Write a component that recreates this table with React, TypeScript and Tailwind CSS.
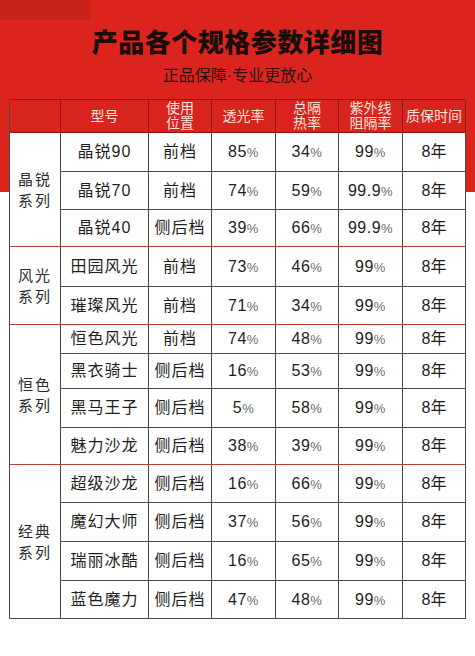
import React from "react";

type Item = { model: string; pos: string; t: string; h: string; uv: string };

const groups: { name: [string, string]; span: string; rows: Item[]; red: boolean }[] = [
  {
    name: ["晶锐", "系列"],
    span: "row-span-3",
    red: true,
    rows: [
      { model: "晶锐90", pos: "前档", t: "85", h: "34", uv: "99" },
      { model: "晶锐70", pos: "前档", t: "74", h: "59", uv: "99.9" },
      { model: "晶锐40", pos: "侧后档", t: "39", h: "66", uv: "99.9" },
    ],
  },
  {
    name: ["风光", "系列"],
    span: "row-span-2",
    red: true,
    rows: [
      { model: "田园风光", pos: "前档", t: "73", h: "46", uv: "99" },
      { model: "璀璨风光", pos: "前档", t: "71", h: "34", uv: "99" },
    ],
  },
  {
    name: ["恒色", "系列"],
    span: "row-span-4",
    red: true,
    rows: [
      { model: "恒色风光", pos: "前档", t: "74", h: "48", uv: "99" },
      { model: "黑衣骑士", pos: "侧后档", t: "16", h: "53", uv: "99" },
      { model: "黑马王子", pos: "侧后档", t: "5", h: "58", uv: "99" },
      { model: "魅力沙龙", pos: "侧后档", t: "38", h: "39", uv: "99" },
    ],
  },
  {
    name: ["经典", "系列"],
    span: "row-span-4",
    red: false,
    rows: [
      { model: "超级沙龙", pos: "侧后档", t: "16", h: "66", uv: "99" },
      { model: "魔幻大师", pos: "侧后档", t: "37", h: "56", uv: "99" },
      { model: "瑞丽冰酷", pos: "侧后档", t: "16", h: "65", uv: "99" },
      { model: "蓝色魔力", pos: "侧后档", t: "47", h: "48", uv: "99" },
    ],
  },
];

const heads = ["", "型号", "使用\n位置", "透光率", "总隔\n热率", "紫外线\n阻隔率", "质保时间"];

const Pct = ({ v }: { v: string }) => (
  <span className="text-[16px] text-[#1e1e1e] tracking-[0.5px]">
    {v}
    <span className="text-[13px] text-[#6a6a6a]">%</span>
  </span>
);

export default function App() {
  const cells: React.ReactNode[] = [];
  heads.forEach((h, i) => {
    cells.push(
      <div
        key={"h" + i}
        className="flex items-center justify-center text-center whitespace-pre-line bg-[#d9231d] border-r border-b border-[#8f1a14] text-[14px] leading-[15px] text-[#fbe3dc]"
      >
        {h}
      </div>
    );
  });

  groups.forEach((g, gi) => {
    const bottom = g.red ? "border-b-[#b8403a]" : "border-b-[#4a4a4a]";
    cells.push(
      <div
        key={"g" + gi}
        className={`${g.span} flex flex-col items-center justify-center bg-white border-r border-b border-r-[#4a4a4a] ${bottom} text-[15px] leading-[21px] text-[#2a2a2a] tracking-[2px]`}
      >
        <span>{g.name[0]}</span>
        <span>{g.name[1]}</span>
      </div>
    );
    g.rows.forEach((r, ri) => {
      const last = ri === g.rows.length - 1;
      const cls = `flex items-center justify-center bg-white border-r border-b border-r-[#4a4a4a] ${
        last ? bottom : "border-b-[#4a4a4a]"
      }`;
      cells.push(
        <div key={`m${gi}-${ri}`} className={cls + " text-[16px] text-[#1e1e1e] tracking-[1px]"}>
          {r.model}
        </div>,
        <div key={`p${gi}-${ri}`} className={cls + " text-[16px] text-[#1e1e1e] tracking-[1px]"}>
          {r.pos}
        </div>,
        <div key={`t${gi}-${ri}`} className={cls}>
          <Pct v={r.t} />
        </div>,
        <div key={`x${gi}-${ri}`} className={cls}>
          <Pct v={r.h} />
        </div>,
        <div key={`u${gi}-${ri}`} className={cls}>
          <Pct v={r.uv} />
        </div>,
        <div key={`y${gi}-${ri}`} className={cls + " text-[16px] text-[#1e1e1e]"}>
          8年
        </div>
      );
    });
  });

  return (
    <div className="relative w-[475px] h-[656px] overflow-hidden bg-[linear-gradient(to_bottom,#dc241f_0px,#dc241f_192px,#ffffff_192px)] font-['Liberation_Sans','Noto_Sans_CJK_SC',sans-serif]">
      <div className="absolute left-0 top-0 w-[90px] h-[20px] bg-[#c9221d]" />
      <div className="flex flex-col items-center pt-[27px]">
        <div className="h-[32px] leading-[32px] text-[26px] font-black text-[#1a0d0b] tracking-[0.5px]">
          产品各个规格参数详细图
        </div>
        <div className="mt-[6px] h-[22px] leading-[22px] text-[16px] text-[#2a1210]">正品保障·专业更放心</div>
      </div>
      <div className="mt-[12px] ml-[9px] w-[456px]">
        <div className="grid grid-cols-[51px_88px_63px_64px_63px_64px_63px] grid-rows-[33px_39px_38px_37px_40px_38px_29px_35px_39px_37px_38px_39px_39px_38px] border-l border-t border-l-[#4a4a4a] border-t-[#8f1a14]">
          {cells}
        </div>
      </div>
    </div>
  );
}
